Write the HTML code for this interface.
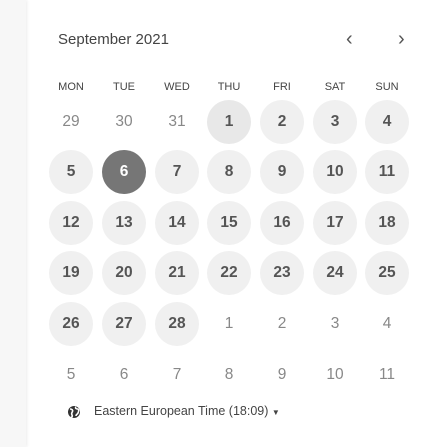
<!DOCTYPE html>
<html><head><style>
body{margin:0;width:438px;height:447px;background:#fff;font-family:"Liberation Sans",sans-serif;position:relative;overflow:hidden}
.side{position:absolute;left:0;top:0;width:26px;height:447px;background:#f7f7f7;box-shadow:1px 0 3px rgba(0,0,0,.08)}
.t{position:absolute;left:58px;top:31px;font-size:15px;color:#444}
.arr{position:absolute;top:28px;font-size:20px;color:#555}
.h{position:absolute;top:81px;width:50px;margin-left:-25px;text-align:center;font-size:11px;color:#444}
.d{position:absolute;width:44px;height:44px;margin:-22px 0 0 -22px;border-radius:50%;text-align:center;line-height:44px;font-size:15.5px;font-weight:bold;color:#555;background:#f0f0f0}
.d.o{background:none;font-weight:normal;color:#888}
.d.s{background:#767676;color:#fff}
.d.f{background:#e8e8e8}
.tz{position:absolute;left:94px;top:404px;font-size:12.5px;color:#444}
</style></head><body>
<div class="side"></div>
<div class="t">September 2021</div>
<div class="arr" style="left:346px">&#8249;</div>
<div class="arr" style="left:398px">&#8250;</div>
<div class="h" style="left:71px">MON</div><div class="h" style="left:124px">TUE</div><div class="h" style="left:177px">WED</div><div class="h" style="left:229px">THU</div><div class="h" style="left:282px">FRI</div><div class="h" style="left:335px">SAT</div><div class="h" style="left:387px">SUN</div>

<div class="d o" style="left:71px;top:122px">29</div><div class="d o" style="left:124px;top:122px">30</div><div class="d o" style="left:177px;top:122px">31</div><div class="d f" style="left:229px;top:122px">1</div><div class="d" style="left:282px;top:122px">2</div><div class="d" style="left:335px;top:122px">3</div><div class="d" style="left:387px;top:122px">4</div>

<div class="d" style="left:71px;top:172px">5</div><div class="d s" style="left:124px;top:172px">6</div><div class="d" style="left:177px;top:172px">7</div><div class="d" style="left:229px;top:172px">8</div><div class="d" style="left:282px;top:172px">9</div><div class="d" style="left:335px;top:172px">10</div><div class="d" style="left:387px;top:172px">11</div>

<div class="d" style="left:71px;top:223px">12</div><div class="d" style="left:124px;top:223px">13</div><div class="d" style="left:177px;top:223px">14</div><div class="d" style="left:229px;top:223px">15</div><div class="d" style="left:282px;top:223px">16</div><div class="d" style="left:335px;top:223px">17</div><div class="d" style="left:387px;top:223px">18</div>

<div class="d" style="left:71px;top:273px">19</div><div class="d" style="left:124px;top:273px">20</div><div class="d" style="left:177px;top:273px">21</div><div class="d" style="left:229px;top:273px">22</div><div class="d" style="left:282px;top:273px">23</div><div class="d" style="left:335px;top:273px">24</div><div class="d" style="left:387px;top:273px">25</div>

<div class="d" style="left:71px;top:324px">26</div><div class="d" style="left:124px;top:324px">27</div><div class="d" style="left:177px;top:324px">28</div><div class="d o" style="left:229px;top:324px">1</div><div class="d o" style="left:282px;top:324px">2</div><div class="d o" style="left:335px;top:324px">3</div><div class="d o" style="left:387px;top:324px">4</div>

<div class="d o" style="left:71px;top:375px">5</div><div class="d o" style="left:124px;top:375px">6</div><div class="d o" style="left:177px;top:375px">7</div><div class="d o" style="left:229px;top:375px">8</div><div class="d o" style="left:282px;top:375px">9</div><div class="d o" style="left:335px;top:375px">10</div><div class="d o" style="left:387px;top:375px">11</div>

<svg style="position:absolute;left:67px;top:405px" width="14" height="14" viewBox="0 0 14 14"><circle cx="7" cy="7" r="6" fill="#333"/><path d="M3 4c2 0 3 1 2.5 2.5S4 8 5 10s-1 2.5-1 2.5M9 2c-1 1 0 2 1.5 2S12 6 11 8s-2 1-2 3" stroke="#fff" stroke-width="1.6" fill="none"/></svg>
<div class="tz">Eastern European Time (18:09) <span style="font-size:8px">&#9660;</span></div>
</body></html>
